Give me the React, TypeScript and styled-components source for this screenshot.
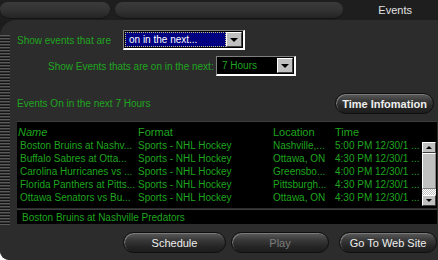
import styled, { createGlobalStyle } from "styled-components";

const GlobalStyle = createGlobalStyle`
  html, body {
    margin: 0;
    padding: 0;
    background: #ffffff;
  }
  body {
    font-family: "Liberation Sans", Arial, sans-serif;
    font-size: 10px;
  }
`;

const Window = styled.div`
  width: 438px;
  height: 260px;
  background: #1c1c1c;
  display: flex;
  flex-direction: column;
  overflow: hidden;
  border-bottom-left-radius: 9px;
`;

const TopBar = styled.div`
  height: 20px;
  display: flex;
  align-items: flex-start;
  background: #1e1e1e;
`;

const Tab = styled.div<{ w: number; ml: number }>`
  width: ${(p) => p.w}px;
  margin-left: ${(p) => p.ml}px;
  margin-top: 2px;
  height: 16px;
  border-radius: 8px 8px 10px 10px;
  background: linear-gradient(#3a3a3a, #333333 50%, #242424);
  border-bottom: 1px solid #141414;
`;

const Title = styled.div`
  margin-left: auto;
  margin-right: 26px;
  margin-top: 4px;
  color: #e2e2e2;
  font-size: 11px;
`;

const Body = styled.div`
  flex: 1;
  display: flex;
  background: #2c2c2c;
  border-top-left-radius: 16px;
  border-bottom-left-radius: 9px;
`;

const Grip = styled.div`
  width: 10px;
  height: 190px;
  margin-top: 15px;
  background: repeating-linear-gradient(
    to bottom,
    #5a5a5a 0 1px,
    #343434 1px 2px,
    #141414 2px 3px
  );
`;

const Content = styled.div`
  flex: 1;
  display: flex;
  flex-direction: column;
  padding: 10px 1px 0 7px;
`;

const Row = styled.div<{ mt?: number; pl?: number }>`
  display: flex;
  align-items: center;
  margin-top: ${(p) => p.mt ?? 0}px;
  padding-left: ${(p) => p.pl ?? 0}px;
`;

const Label = styled.div<{ w?: number }>`
  color: #1fa51f;
  font-size: 10px;
  width: ${(p) => (p.w ? `${p.w}px` : "auto")};
  white-space: nowrap;
`;

const Select = styled.div<{ w: number }>`
  width: ${(p) => p.w}px;
  height: 20px;
  box-sizing: border-box;
  display: flex;
  border-top: 1px solid #808080;
  border-left: 1px solid #808080;
  border-bottom: 2px solid #ffffff;
  border-right: 2px solid #ffffff;
  background: #000;
  padding: 1px;
`;

const SelectValue = styled.div<{ active?: boolean }>`
  flex: 1;
  display: flex;
  align-items: center;
  padding-left: 4px;
  font-size: 10px;
  color: ${(p) => (p.active ? "#ffffff" : "#1fa51f")};
  background: ${(p) => (p.active ? "#000080" : "#000")};
  outline: ${(p) => (p.active ? "1px dotted #c8c080" : "none")};
  outline-offset: -1px;
`;

const DropButton = styled.div`
  width: 16px;
  box-sizing: border-box;
  background: #c0c0c0;
  border-top: 1px solid #fff;
  border-left: 1px solid #fff;
  border-right: 1px solid #404040;
  border-bottom: 1px solid #404040;
  display: flex;
  align-items: center;
  justify-content: center;
  &::after {
    content: "";
    border-left: 4px solid transparent;
    border-right: 4px solid transparent;
    border-top: 4px solid #000;
  }
`;

const PillButton = styled.div<{ w: number; ml?: number; bold?: boolean; disabled?: boolean }>`
  width: ${(p) => p.w}px;
  height: 21px;
  margin-left: ${(p) => p.ml ?? 0}px;
  box-sizing: border-box;
  border-radius: 11px;
  border: 1px solid #0e0e0e;
  background: linear-gradient(#5c5c5c, #3a3a3a 35%, #262626 70%, #1c1c1c);
  box-shadow: inset 1px 1px 0 #7a7a7a;
  display: flex;
  align-items: center;
  justify-content: center;
  font-size: 11px;
  font-weight: ${(p) => (p.bold ? 700 : 400)};
  color: ${(p) => (p.disabled ? "#7c7c7c" : "#eeeeee")};
`;

const ListBox = styled.div`
  margin-top: 7px;
  height: 86px;
  background: #000;
  border-top: 1px solid #3c3c3c;
  display: flex;
  position: relative;
`;

const Table = styled.div`
  flex: 1;
  display: flex;
  flex-direction: column;
  padding-top: 2px;
`;

const Cols = "121px 135px 61px 86px";

const Header = styled.div`
  display: grid;
  grid-template-columns: ${Cols};
  height: 15px;
  align-items: center;
  color: #1fa51f;
  font-size: 11px;
`;

const HeadCell = styled.div<{ italic?: boolean; pl?: number }>`
  font-style: ${(p) => (p.italic ? "italic" : "normal")};
  padding-left: ${(p) => p.pl ?? 0}px;
  white-space: nowrap;
`;

const DataRow = styled.div`
  display: grid;
  grid-template-columns: ${Cols};
  height: 13px;
  align-items: center;
  color: #1fa51f;
  font-size: 10px;
`;

const Cell = styled.div<{ pl?: number }>`
  padding-left: ${(p) => p.pl ?? 0}px;
  white-space: nowrap;
`;

const ScrollBar = styled.div`
  position: absolute;
  right: 1px;
  top: 20px;
  width: 14px;
  height: 64px;
  display: flex;
  flex-direction: column;
  background: repeating-conic-gradient(#c0c0c0 0 25%, #ffffff 0 50%) 0 0 / 2px 2px;
`;

const ArrowButton = styled.div<{ up?: boolean }>`
  height: 11px;
  box-sizing: border-box;
  background: #c0c0c0;
  border-top: 1px solid #fff;
  border-left: 1px solid #fff;
  border-right: 1px solid #404040;
  border-bottom: 1px solid #404040;
  display: flex;
  align-items: center;
  justify-content: center;
  &::after {
    content: "";
    border-left: 3px solid transparent;
    border-right: 3px solid transparent;
    ${(p) => (p.up ? "border-bottom: 3px solid #000;" : "border-top: 3px solid #000;")}
  }
`;

const Thumb = styled.div`
  height: 36px;
  box-sizing: border-box;
  background: #c0c0c0;
  border-top: 1px solid #fff;
  border-left: 1px solid #fff;
  border-right: 1px solid #808080;
  border-bottom: 1px solid #808080;
`;

const Track = styled.div`
  flex: 1;
`;

const Detail = styled.div`
  margin-top: 1px;
  height: 14px;
  background: #000;
  border-top: 1px solid #3c3c3c;
  color: #1fa51f;
  font-size: 10px;
  display: flex;
  align-items: center;
  padding-left: 5px;
`;

const Buttons = styled.div`
  display: flex;
  margin-top: 8px;
  padding-left: 106px;
`;

const events = [
  ["Boston Bruins at Nashv...", "Sports - NHL Hockey", "Nashville,...", "5:00 PM 12/30/1 ..."],
  ["Buffalo Sabres at Otta...", "Sports - NHL Hockey", "Ottawa, ON", "4:30 PM 12/30/1 ..."],
  ["Carolina Hurricanes vs ...", "Sports - NHL Hockey", "Greensbo...", "4:00 PM 12/30/1 ..."],
  ["Florida Panthers at Pitts...", "Sports - NHL Hockey", "Pittsburgh...", "4:30 PM 12/30/1 ..."],
  ["Ottawa Senators vs Bu...", "Sports - NHL Hockey", "Ottawa, ON", "4:30 PM 12/30/1 ..."],
];

export default function App() {
  return (
    <>
      <GlobalStyle />
      <Window>
        <TopBar>
          <Tab w={110} ml={0} />
          <Tab w={228} ml={5} />
          <Title>Events</Title>
        </TopBar>
        <Body>
          <Grip />
          <Content>
            <Row>
              <Label w={106}>Show events that are</Label>
              <Select w={122}>
                <SelectValue active>on in the next...</SelectValue>
                <DropButton />
              </Select>
            </Row>
            <Row mt={6} pl={31}>
              <Label w={168}>Show Events thats are on in the next:</Label>
              <Select w={80}>
                <SelectValue>7 Hours</SelectValue>
                <DropButton />
              </Select>
            </Row>
            <Row mt={17}>
              <Label w={318}>Events On in the next 7 Hours</Label>
              <PillButton w={99} bold>
                Time Infomation
              </PillButton>
            </Row>
            <ListBox>
              <Table>
                <Header>
                  <HeadCell italic pl={1}>Name</HeadCell>
                  <HeadCell>Format</HeadCell>
                  <HeadCell>Location</HeadCell>
                  <HeadCell pl={1}>Time</HeadCell>
                </Header>
                {events.map((e) => (
                  <DataRow key={e[0]}>
                    <Cell pl={3}>{e[0]}</Cell>
                    <Cell>{e[1]}</Cell>
                    <Cell>{e[2]}</Cell>
                    <Cell pl={1}>{e[3]}</Cell>
                  </DataRow>
                ))}
              </Table>
              <ScrollBar>
                <ArrowButton up />
                <Thumb />
                <Track />
                <ArrowButton />
              </ScrollBar>
            </ListBox>
            <Detail>Boston Bruins at Nashville Predators</Detail>
            <Buttons>
              <PillButton w={103}>Schedule</PillButton>
              <PillButton w={98} ml={5} disabled>
                Play
              </PillButton>
              <PillButton w={98} ml={10}>
                Go To Web Site
              </PillButton>
            </Buttons>
          </Content>
        </Body>
      </Window>
    </>
  );
}
